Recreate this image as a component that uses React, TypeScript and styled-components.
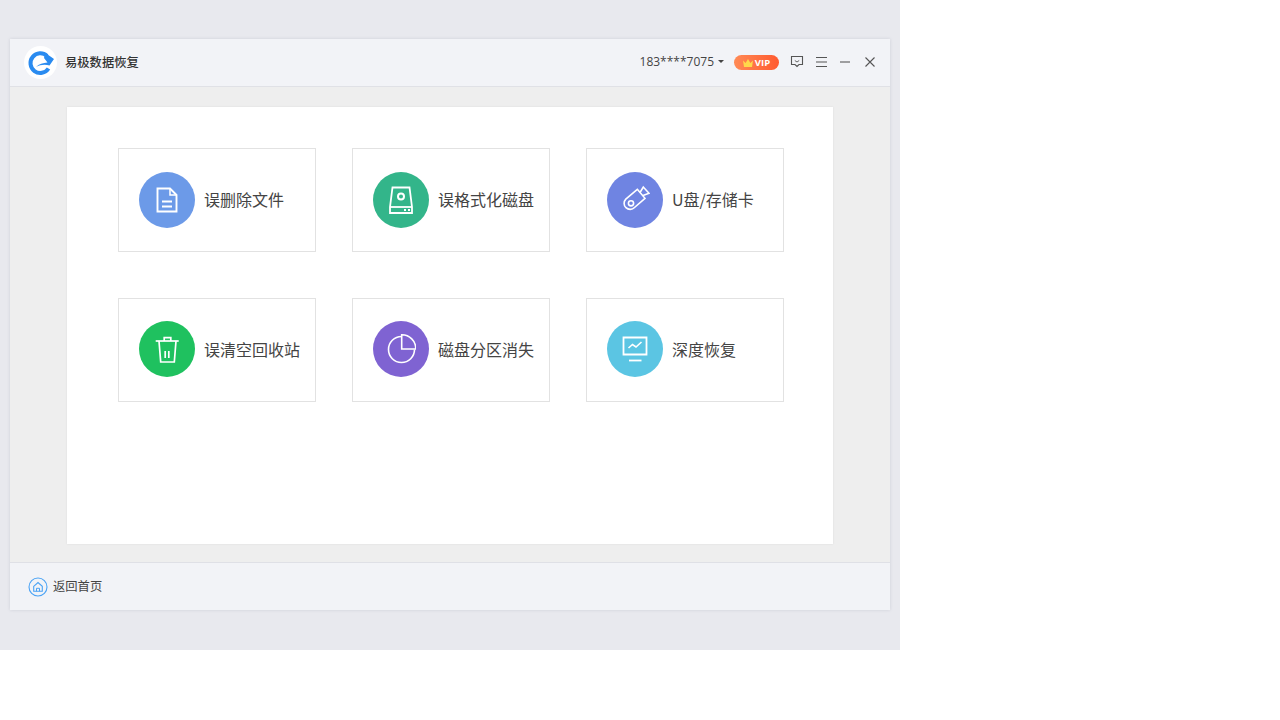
import { ReactNode } from 'react';
import styled, { createGlobalStyle } from 'styled-components';

const GlobalStyle = createGlobalStyle`
  html, body {
    margin: 0;
    padding: 0;
    background: #fff;
    font-family: "Open Sans", "Noto Sans CJK SC", sans-serif;
  }
`;

const DocIcon = () => (
  <svg width="24" height="26" viewBox="0 0 24 26" fill="none" stroke="#fff" strokeWidth="1.9">
    <path d="M2.500 1.500h12.500l6.500 6.500v16.500H2.500z" />
    <path d="M15 1.500v6.500h6.500" strokeWidth="1.500" />
    <path d="M7 14.500h10M7 19.500h10" />
  </svg>
);

const DiskIcon = () => (
  <svg width="26" height="28" viewBox="0 0 26 28" fill="none" stroke="#fff" strokeWidth="1.800">
    <path d="M2 21 4.500 1.500h17L24 21v6H2z" />
    <path d="M2 21h22" />
    <circle cx="13" cy="10.500" r="3" strokeWidth="2" />
    <path d="M16 24h2M20 24h2" />
  </svg>
);

const UsbIcon = () => (
  <svg width="30" height="30" viewBox="0 0 30 30" fill="none" stroke="#fff" strokeWidth="1.600">
    <path d="M17.300 4.300 25 13.300 14.500 22.500A6 6 0 0 1 5.800 14.100z" />
    <path d="M20 7.500 23.300 2 29 8.300 23 10.500" />
    <circle cx="11" cy="18.300" r="2.600" />
  </svg>
);

const TrashIcon = () => (
  <svg width="24" height="27" viewBox="0 0 24 27" fill="none" stroke="#fff" strokeWidth="1.700">
    <path d="M0.700 5h23" />
    <path d="M9.200 5V1.700h6.600V5" />
    <path d="M4 5 5.700 26h13.600L21 5" />
    <path d="M10.200 15v7M13.800 15v7" />
  </svg>
);

const PieIcon = () => (
  <svg width="30" height="30" viewBox="0 0 30 30" fill="none" stroke="#fff" strokeWidth="1.600">
    <path d="M15.500 2.500A13 13 0 1 0 28.500 15.500" />
    <path d="M15.700 0.800V15H29.800A14 14 0 0 0 15.700 0.800z" />
  </svg>
);

const MonitorIcon = () => (
  <svg width="26" height="26" viewBox="0 0 26 26" fill="none" stroke="#fff" strokeWidth="1.800">
    <path d="M1.500 1.500h23v17h-23z" />
    <path d="M6.500 12l4-3.500 3.500 2.500 5.500-5" strokeWidth="1.600" />
    <path d="M7 24.500h12.500" />
  </svg>
);

const CrownIcon = () => (
  <svg width="10" height="8" viewBox="0 0 10 8" fill="#ffd84a">
    <path d="M0 1.500 2.600 4 5 0l2.400 4L10 1.500 9 8H1z" />
  </svg>
);

const LogoIcon = () => (
  <svg width="33" height="33" viewBox="0 0 33 33">
    <circle cx="16.500" cy="16.500" r="16.500" fill="#fff" />
    <path d="M23 10A9.800 9.800 0 1 0 24.500 22.500" fill="none" stroke="#2a8bf0" strokeWidth="4" />
    <path d="M21.500 7 30 13 25.500 19.500C21 18.300 16 18.800 12 21 15 17.800 19 16.800 23.500 16.500L20 12z" fill="#2a8bf0" />
  </svg>
);

const HomeIcon = () => (
  <svg width="20" height="20" viewBox="0 0 20 20" fill="none" stroke="#4ba3f5">
    <circle cx="10" cy="10" r="9" strokeWidth="1.100" />
    <path d="M5.700 9.300 10 5.500l4.300 3.800v5h-8.600z" strokeWidth="1.100" />
    <path d="M8.500 14.300v-3h3v3" strokeWidth="1" />
  </svg>
);

const Desktop = styled.div`
  width: 900px;
  height: 650px;
  background: #e8e9ee;
  padding: 39px 10px 40px;
  box-sizing: border-box;
`;

const AppWindow = styled.div`
  height: 571px;
  display: flex;
  flex-direction: column;
  box-shadow: 0 0 3px rgba(120, 125, 140, 0.22);
`;

const TitleBar = styled.header`
  height: 48px;
  flex: none;
  box-sizing: border-box;
  display: flex;
  align-items: center;
  background: #f2f3f7;
  border-bottom: 1px solid #e0e1e6;
  padding: 0 14px 2px 14px;
`;

const Brand = styled.div`
  display: flex;
  align-items: center;
  gap: 8px;
  flex: 1;

  svg {
    margin-top: 2px;
  }
`;

const BrandName = styled.span`
  font-family: "Noto Sans CJK SC", sans-serif;
  font-size: 12.300px;
  font-weight: 500;
  color: #333;
`;

const Account = styled.span`
  font-size: 12px;
  color: #444;
`;

const Caret = styled.span`
  width: 0;
  height: 0;
  margin-left: 4px;
  border-left: 3px solid transparent;
  border-right: 3px solid transparent;
  border-top: 3.500px solid #444;
`;

const VipBadge = styled.span`
  margin: 2px 0 0 10px;
  width: 45px;
  height: 15px;
  border-radius: 8px;
  background: linear-gradient(90deg, #ff8a55, #ff5a30);
  display: flex;
  align-items: center;
  justify-content: center;
  gap: 2px;
  color: #fff;
  font-size: 9.500px;
  font-weight: 700;
  line-height: 15px;
`;

const WindowButtons = styled.div`
  display: flex;
  align-items: center;
  gap: 12px;
  margin-left: 11px;
`;

const Content = styled.main`
  flex: 1;
  background: #eeeeee;
  padding: 20px 57px 18px;
  display: flex;
`;

const Panel = styled.section`
  flex: 1;
  background: #fff;
  padding: 41px 49px 0 51px;
  box-shadow: 0 0 2px rgba(0, 0, 0, 0.08);
`;

const CardGrid = styled.div`
  display: grid;
  grid-template-columns: repeat(3, 198px);
  grid-auto-rows: 104px;
  column-gap: 36px;
  row-gap: 46px;
`;

const Circle = styled.div<{ $color: string }>`
  width: 56px;
  height: 56px;
  flex: none;
  border-radius: 50%;
  background: ${(props) => props.$color};
  display: flex;
  align-items: center;
  justify-content: center;
`;

const Card = styled.div`
  box-sizing: border-box;
  border: 1px solid #e2e2e2;
  display: flex;
  align-items: center;
  gap: 9px;
  padding-left: 20px;

  &:nth-child(n + 4) ${Circle} {
    margin-bottom: 2px;
  }
`;

const CardLabel = styled.span`
  font-family: "Noto Sans CJK SC", sans-serif;
  font-size: 16px;
  color: #444;
  white-space: nowrap;
  padding-bottom: 2px;
`;

const Footer = styled.footer`
  height: 48px;
  flex: none;
  box-sizing: border-box;
  background: #f2f3f7;
  border-top: 1px solid #dfe0e6;
  display: flex;
  align-items: center;
  gap: 5px;
  padding-left: 18px;
`;

const FooterLabel = styled.span`
  font-family: "Noto Sans CJK SC", sans-serif;
  font-size: 12.300px;
  color: #444;
  padding-bottom: 2px;
`;

const cards: { label: string; color: string; icon: ReactNode }[] = [
  { label: '误删除文件', color: '#6c9ae8', icon: <DocIcon /> },
  { label: '误格式化磁盘', color: '#33b58a', icon: <DiskIcon /> },
  { label: 'U盘/存储卡', color: '#6f84e2', icon: <UsbIcon /> },
  { label: '误清空回收站', color: '#1fc15f', icon: <TrashIcon /> },
  { label: '磁盘分区消失', color: '#7f63d2', icon: <PieIcon /> },
  { label: '深度恢复', color: '#5bc5e3', icon: <MonitorIcon /> },
];

export default function App() {
  return (
    <>
      <GlobalStyle />
      <Desktop>
        <AppWindow>
          <TitleBar>
            <Brand>
              <LogoIcon />
              <BrandName>易极数据恢复</BrandName>
            </Brand>
            <Account>183****7075</Account>
            <Caret />
            <VipBadge>
              <CrownIcon />
              VIP
            </VipBadge>
            <WindowButtons>
              <svg width="14" height="13" viewBox="0 0 14 13" fill="none" stroke="#555" strokeWidth="1.100">
                <path d="M1.500 1.500h11v8H9L7 11.500 5 9.500H1.500z" />
                <path d="M4.800 5.500 7 7l2.200-1.500" strokeWidth="0.900" />
              </svg>
              <svg width="12" height="12" viewBox="0 0 12 12" stroke="#555" strokeWidth="1.100">
                <path d="M0 1.500h11M0 6h11M0 10.500h11" />
              </svg>
              <svg width="12" height="12" viewBox="0 0 12 12" stroke="#666" strokeWidth="1.200">
                <path d="M0 6h10" />
              </svg>
              <svg width="12" height="12" viewBox="0 0 12 12" stroke="#555" strokeWidth="1.100">
                <path d="M1.500 1.500l9 9M10.500 1.500l-9 9" />
              </svg>
            </WindowButtons>
          </TitleBar>
          <Content>
            <Panel>
              <CardGrid>
                {cards.map((card) => (
                  <Card key={card.label}>
                    <Circle $color={card.color}>{card.icon}</Circle>
                    <CardLabel>{card.label}</CardLabel>
                  </Card>
                ))}
              </CardGrid>
            </Panel>
          </Content>
          <Footer>
            <HomeIcon />
            <FooterLabel>返回首页</FooterLabel>
          </Footer>
        </AppWindow>
      </Desktop>
    </>
  );
}
